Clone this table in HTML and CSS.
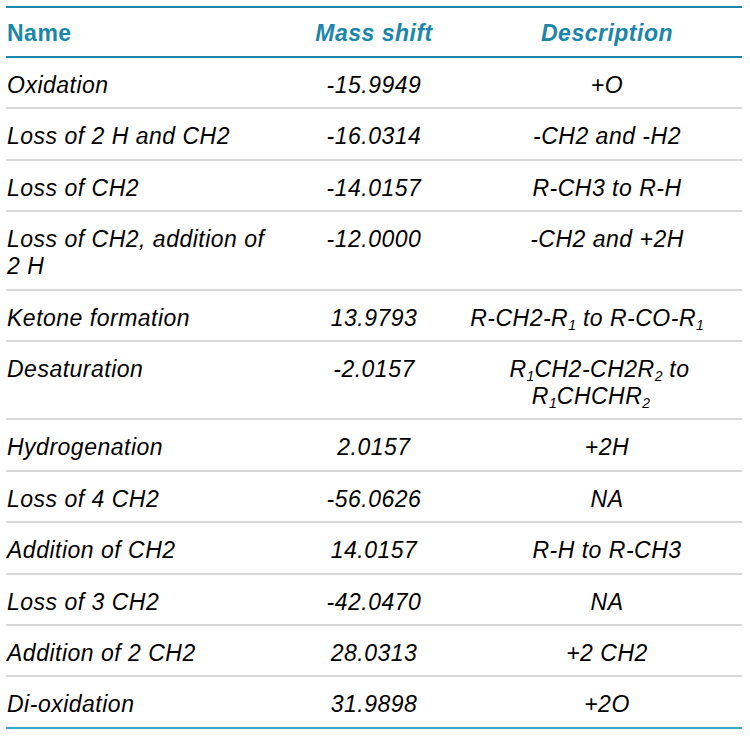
FILE: index.html
```html
<!DOCTYPE html>
<html>
<head>
<meta charset="utf-8">
<link rel="stylesheet" href="styles.css">
</head>
<body>
<table class="mods">
  <colgroup>
    <col class="c-name">
    <col class="c-mass">
    <col class="c-desc">
  </colgroup>
  <thead>
    <tr>
      <th class="name">Name</th>
      <th class="mass"><em>Mass shift</em></th>
      <th class="desc"><em>Description</em></th>
    </tr>
  </thead>
  <tbody>
    <tr><td class="name">Oxidation</td><td class="mass">-15.9949</td><td class="desc">+O</td></tr>
    <tr><td class="name">Loss of 2 H and CH2</td><td class="mass">-16.0314</td><td class="desc">-CH2 and -H2</td></tr>
    <tr><td class="name">Loss of CH2</td><td class="mass">-14.0157</td><td class="desc">R-CH3 to R-H</td></tr>
    <tr><td class="name">Loss of CH2, addition of 2 H</td><td class="mass">-12.0000</td><td class="desc">-CH2 and +2H</td></tr>
    <tr><td class="name">Ketone formation</td><td class="mass">13.9793</td><td class="desc"><span class="ln ln-ketone">R-CH2-R<sub>1</sub> to R-CO-R<sub>1</sub></span></td></tr>
    <tr><td class="name">Desaturation</td><td class="mass">-2.0157</td><td class="desc"><span class="ln ln-desat1">R<sub>1</sub>CH2-CH2R<sub>2</sub> to</span><span class="ln ln-desat2">R<sub>1</sub>CHCHR<sub>2</sub></span></td></tr>
    <tr><td class="name">Hydrogenation</td><td class="mass">2.0157</td><td class="desc">+2H</td></tr>
    <tr><td class="name">Loss of 4 CH2</td><td class="mass">-56.0626</td><td class="desc">NA</td></tr>
    <tr><td class="name">Addition of CH2</td><td class="mass">14.0157</td><td class="desc">R-H to R-CH3</td></tr>
    <tr><td class="name">Loss of 3 CH2</td><td class="mass">-42.0470</td><td class="desc">NA</td></tr>
    <tr><td class="name">Addition of 2 CH2</td><td class="mass">28.0313</td><td class="desc">+2 CH2</td></tr>
    <tr class="last"><td class="name">Di-oxidation</td><td class="mass">31.9898</td><td class="desc">+2O</td></tr>
  </tbody>
</table>
</body>
</html>
```

FILE: styles.css
```css
html, body {
  margin: 0;
  padding: 0;
  background: #ffffff;
}

body {
  padding: 6px 0 0 6px;
  font-family: "Liberation Sans", Arial, sans-serif;
}

.mods {
  width: 736px;
  table-layout: fixed;
  border-collapse: collapse;
  border-top: 2px solid #1a86a9;
  font-size: 23px;
  line-height: 27px;
  letter-spacing: 0.5px;
}

.c-name { width: 270px; }
.c-mass { width: 196px; }
.c-desc { width: 270px; }

.mods th {
  color: #1a86a9;
  font-weight: bold;
  padding: 12px 0 9px;
  border-bottom: 2px solid #1a86a9;
  vertical-align: top;
}

.mods th em {
  font-style: italic;
}

.mods td {
  color: #000000;
  font-style: italic;
  padding: 14px 0 8.4px;
  border-bottom: 2px solid #d8d8d8;
  vertical-align: top;
}

.mods .name {
  text-align: left;
  padding-left: 1px;
}

.mods .mass,
.mods .desc {
  text-align: center;
}

.mods tr.last td {
  border-bottom: 2px solid #3aa7c7;
}

.mods sub {
  font-size: 14px;
  line-height: 0;
  vertical-align: -4px;
  letter-spacing: 0;
}

.ln {
  display: block;
}

.ln-ketone { margin-left: -40px; }
.ln-desat1 { margin-left: -15px; }
.ln-desat2 { margin-left: -32px; }
```
